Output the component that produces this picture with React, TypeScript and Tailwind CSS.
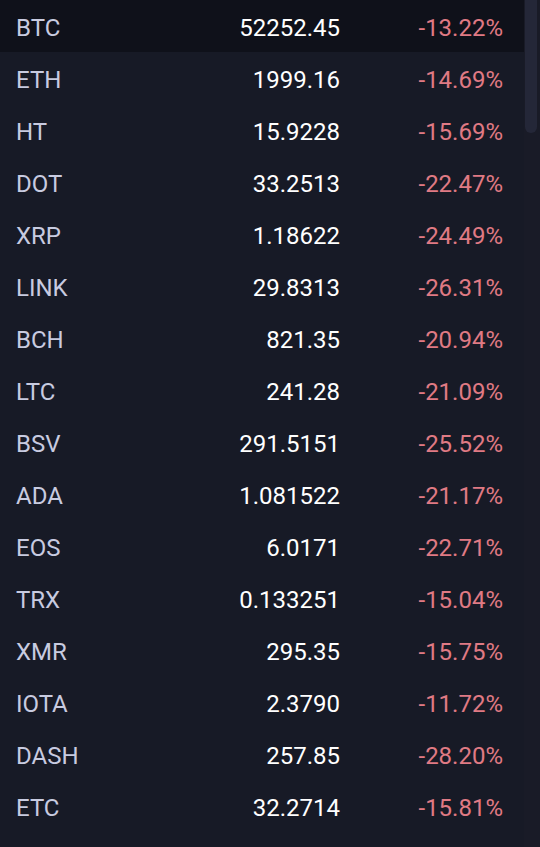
import React from "react";

const rows: [string, string, string][] = [
  ["BTC", "52252.45", "-13.22%"],
  ["ETH", "1999.16", "-14.69%"],
  ["HT", "15.9228", "-15.69%"],
  ["DOT", "33.2513", "-22.47%"],
  ["XRP", "1.18622", "-24.49%"],
  ["LINK", "29.8313", "-26.31%"],
  ["BCH", "821.35", "-20.94%"],
  ["LTC", "241.28", "-21.09%"],
  ["BSV", "291.5151", "-25.52%"],
  ["ADA", "1.081522", "-21.17%"],
  ["EOS", "6.0171", "-22.71%"],
  ["TRX", "0.133251", "-15.04%"],
  ["XMR", "295.35", "-15.75%"],
  ["IOTA", "2.3790", "-11.72%"],
  ["DASH", "257.85", "-28.20%"],
  ["ETC", "32.2714", "-15.81%"],
];

export default function App() {
  return (
    <div
      className="w-[540px] h-[847px] overflow-hidden bg-[#171a26] flex"
      style={{ fontFamily: "Roboto, 'Noto Sans', sans-serif" }}
    >
      <div className="w-[524px] flex flex-col">
        {rows.map(([s, p, c], i) => (
          <div
            key={s}
            className={`h-[52px] shrink-0 flex items-center pl-4 pr-[21px] text-[24px] leading-[32px] pt-[3px] ${
              i === 0 ? "bg-[#0f111a]" : ""
            }`}
          >
            <span className="flex-1 text-[#c8cbe0]">{s}</span>
            <span className="text-white">{p}</span>
            <span className="w-[163px] text-right text-[#e07a84]">{c}</span>
          </div>
        ))}
      </div>
      <div className="w-[16px] bg-[#191b27] pl-[1px]">
        <div className="w-[12px] h-[133px] rounded-b-full bg-[#242738]" />
      </div>
    </div>
  );
}
